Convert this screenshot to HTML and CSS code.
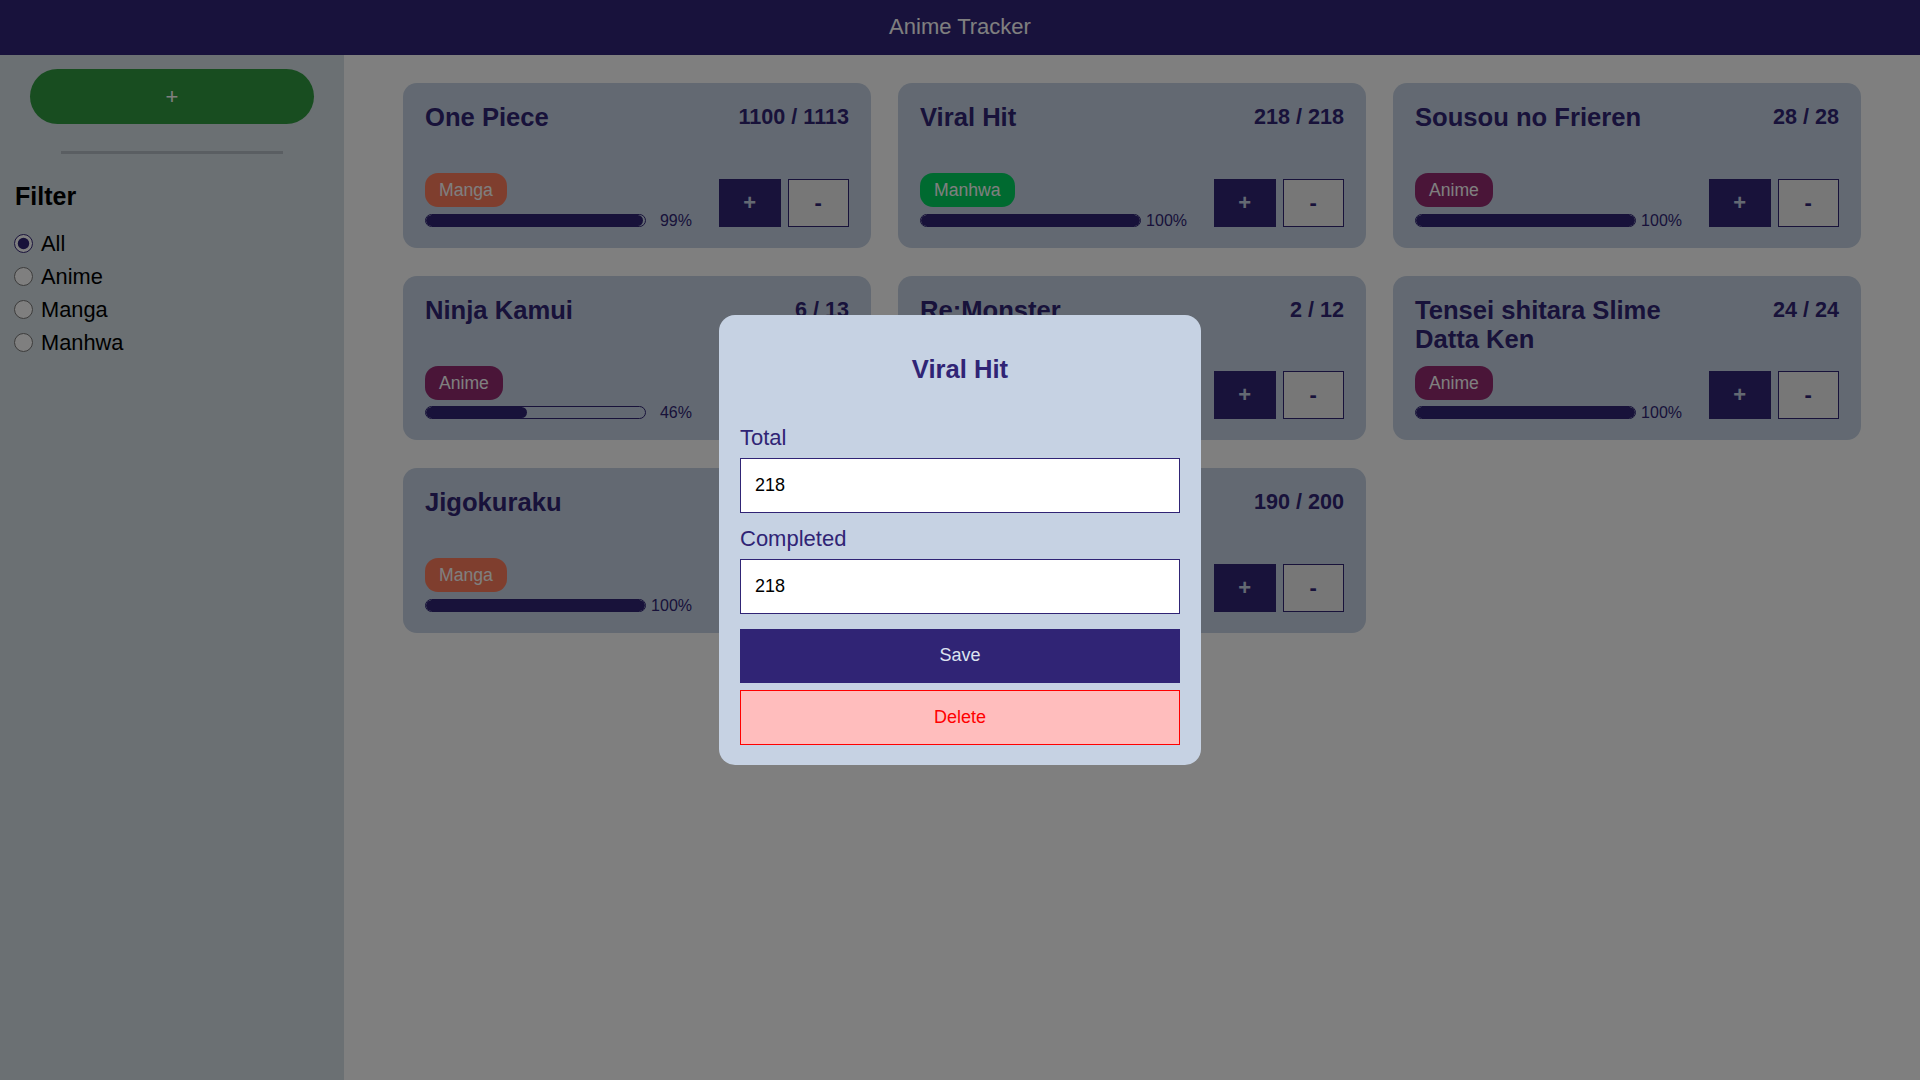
FILE: index.html
```html
<!DOCTYPE html>
<html lang="en">
<head>
<meta charset="utf-8">
<title>Anime Tracker</title>
<link rel="stylesheet" href="styles.css">
</head>
<body>
<header class="topbar">Anime Tracker</header>
<div class="layout">
  <aside class="sidebar">
    <button class="add-btn" type="button">+</button>
    <hr class="divider">
    <h2 class="filter-title">Filter</h2>
    <div class="filter-list">
      <label class="filter-item"><input type="radio" name="filter" checked> All</label>
      <label class="filter-item"><input type="radio" name="filter"> Anime</label>
      <label class="filter-item"><input type="radio" name="filter"> Manga</label>
      <label class="filter-item"><input type="radio" name="filter"> Manhwa</label>
    </div>
  </aside>
  <main class="grid">
    <article class="card">
      <div class="card-head"><h3 class="card-title">One Piece</h3><span class="count">1100 / 1113</span></div>
      <div class="card-foot">
        <div class="meta">
          <span class="badge badge-manga">Manga</span>
          <div class="progress-row"><div class="bar"><div class="fill" style="width:99%"></div></div><span class="pct">99%</span></div>
        </div>
        <div class="actions"><button class="btn-plus" type="button">+</button><button class="btn-minus" type="button">-</button></div>
      </div>
    </article>
    <article class="card">
      <div class="card-head"><h3 class="card-title">Viral Hit</h3><span class="count">218 / 218</span></div>
      <div class="card-foot">
        <div class="meta">
          <span class="badge badge-manhwa">Manhwa</span>
          <div class="progress-row"><div class="bar"><div class="fill" style="width:100%"></div></div><span class="pct">100%</span></div>
        </div>
        <div class="actions"><button class="btn-plus" type="button">+</button><button class="btn-minus" type="button">-</button></div>
      </div>
    </article>
    <article class="card">
      <div class="card-head"><h3 class="card-title">Sousou no Frieren</h3><span class="count">28 / 28</span></div>
      <div class="card-foot">
        <div class="meta">
          <span class="badge badge-anime">Anime</span>
          <div class="progress-row"><div class="bar"><div class="fill" style="width:100%"></div></div><span class="pct">100%</span></div>
        </div>
        <div class="actions"><button class="btn-plus" type="button">+</button><button class="btn-minus" type="button">-</button></div>
      </div>
    </article>
    <article class="card">
      <div class="card-head"><h3 class="card-title">Ninja Kamui</h3><span class="count">6 / 13</span></div>
      <div class="card-foot">
        <div class="meta">
          <span class="badge badge-anime">Anime</span>
          <div class="progress-row"><div class="bar"><div class="fill" style="width:46%"></div></div><span class="pct">46%</span></div>
        </div>
        <div class="actions"><button class="btn-plus" type="button">+</button><button class="btn-minus" type="button">-</button></div>
      </div>
    </article>
    <article class="card">
      <div class="card-head"><h3 class="card-title">Re:Monster</h3><span class="count">2 / 12</span></div>
      <div class="card-foot">
        <div class="meta">
          <span class="badge badge-anime">Anime</span>
          <div class="progress-row"><div class="bar"><div class="fill" style="width:17%"></div></div><span class="pct">17%</span></div>
        </div>
        <div class="actions"><button class="btn-plus" type="button">+</button><button class="btn-minus" type="button">-</button></div>
      </div>
    </article>
    <article class="card">
      <div class="card-head"><h3 class="card-title">Tensei shitara Slime Datta Ken</h3><span class="count">24 / 24</span></div>
      <div class="card-foot">
        <div class="meta">
          <span class="badge badge-anime">Anime</span>
          <div class="progress-row"><div class="bar"><div class="fill" style="width:100%"></div></div><span class="pct">100%</span></div>
        </div>
        <div class="actions"><button class="btn-plus" type="button">+</button><button class="btn-minus" type="button">-</button></div>
      </div>
    </article>
    <article class="card">
      <div class="card-head"><h3 class="card-title">Jigokuraku</h3><span class="count">127 / 127</span></div>
      <div class="card-foot">
        <div class="meta">
          <span class="badge badge-manga">Manga</span>
          <div class="progress-row"><div class="bar"><div class="fill" style="width:100%"></div></div><span class="pct">100%</span></div>
        </div>
        <div class="actions"><button class="btn-plus" type="button">+</button><button class="btn-minus" type="button">-</button></div>
      </div>
    </article>
    <article class="card">
      <div class="card-head"><h3 class="card-title">Solo Leveling</h3><span class="count">190 / 200</span></div>
      <div class="card-foot">
        <div class="meta">
          <span class="badge badge-manhwa">Manhwa</span>
          <div class="progress-row"><div class="bar"><div class="fill" style="width:95%"></div></div><span class="pct">95%</span></div>
        </div>
        <div class="actions"><button class="btn-plus" type="button">+</button><button class="btn-minus" type="button">-</button></div>
      </div>
    </article>
  </main>
</div>
<div class="overlay">
  <form class="modal">
    <h2 class="modal-title">Viral Hit</h2>
    <label class="field-label" for="total">Total</label>
    <input class="field-input field-first" id="total" type="text" value="218">
    <label class="field-label" for="completed">Completed</label>
    <input class="field-input field-second" id="completed" type="text" value="218">
    <button class="save-btn" type="button">Save</button>
    <button class="delete-btn" type="button">Delete</button>
  </form>
</div>
</body>
</html>
```
FILE: styles.css
```css
* { box-sizing: border-box; }

html, body {
  margin: 0;
  height: 100%;
}

body {
  font-family: "Liberation Sans", Arial, sans-serif;
  background: #ffffff;
  color: #000;
  overflow: hidden;
}

.topbar {
  height: 55px;
  background: #302478;
  color: #ffffff;
  font-size: 22px;
  text-align: center;
  padding-top: 14px;
}

.layout {
  display: flex;
  height: calc(100vh - 55px);
}

.sidebar {
  width: 344px;
  flex: 0 0 344px;
  background: #d6e0e6;
  padding: 14px 0 0 0;
  display: flex;
  flex-direction: column;
}

.add-btn {
  margin: 0 30px;
  height: 55px;
  border: none;
  border-radius: 28px;
  background: #309a40;
  color: #ffffff;
  font-family: inherit;
  font-size: 22px;
}

.divider {
  width: 222px;
  margin: 27px auto 0;
  border: none;
  height: 3px;
  background: #b4bcc4;
}

.filter-title {
  margin: 28px 0 0 15px;
  font-size: 25px;
  font-weight: bold;
  line-height: 29px;
}

.filter-list {
  margin-top: 16px;
  padding-left: 14px;
  display: flex;
  flex-direction: column;
}

.filter-item {
  height: 33px;
  display: flex;
  align-items: center;
  gap: 8px;
  font-size: 21.8px;
}

.filter-item input {
  margin: 0;
  width: 19px;
  height: 19px;
  accent-color: #302475;
}

.grid {
  flex: 1;
  display: grid;
  grid-template-columns: repeat(3, 1fr);
  grid-auto-rows: 164.5px;
  gap: 28px 27px;
  padding: 28px 59px;
  align-content: start;
}

.card {
  background: #c6d3e4;
  border-radius: 14px;
  padding: 20px 22px 21px;
  display: flex;
  flex-direction: column;
  justify-content: space-between;
}

.card-head {
  display: flex;
  justify-content: space-between;
  align-items: flex-start;
  gap: 16px;
}

.card-title {
  margin: 0;
  font-size: 25.6px;
  font-weight: bold;
  color: #302475;
  line-height: 1.15;
  max-width: 260px;
}

.count {
  margin-top: 1px;
  font-size: 21.6px;
  font-weight: bold;
  color: #302475;
  white-space: nowrap;
}

.card-foot {
  display: flex;
  justify-content: space-between;
  align-items: flex-end;
}

.meta {
  display: flex;
  flex-direction: column;
  align-items: flex-start;
  gap: 6.5px;
}

.badge {
  display: inline-block;
  padding: 7px 14px;
  border-radius: 13px;
  font-size: 17.6px;
  line-height: 20px;
  color: #ffffff;
}

.badge-manga { background: #ff7d5c; }
.badge-anime { background: #942a70; }
.badge-manhwa { background: #00d460; }

.progress-row {
  display: flex;
  align-items: center;
}

.bar {
  width: 221px;
  height: 13px;
  border: 1px solid #302475;
  border-radius: 7px;
  overflow: hidden;
}

.fill {
  height: 100%;
  background: #302475;
  border-radius: 6px;
}

.pct {
  width: 46px;
  text-align: right;
  font-size: 16px;
  line-height: 13px;
  color: #302475;
}

.actions {
  display: flex;
  gap: 7px;
}

.btn-plus,
.btn-minus {
  width: 61.5px;
  height: 48px;
  border: 1px solid #302475;
  font-family: inherit;
  font-size: 22px;
  font-weight: bold;
  padding: 0;
}

.btn-plus {
  background: #302475;
  color: #c6d3e4;
}

.btn-minus {
  background: #efefef;
  color: #302475;
}

.overlay {
  position: fixed;
  inset: 0;
  background: rgba(0, 0, 0, 0.5);
  display: flex;
  align-items: center;
  justify-content: center;
}

.modal {
  width: 482px;
  background: #c6d2e3;
  border-radius: 16px;
  padding: 20px 21px 20px;
  display: flex;
  flex-direction: column;
}

.modal-title {
  margin: 20px 0 40px;
  text-align: center;
  font-size: 25.6px;
  line-height: 29.4px;
  font-weight: bold;
  color: #302475;
}

.field-label {
  font-size: 22px;
  line-height: 25px;
  color: #302475;
  margin-bottom: 8px;
}

.field-input {
  height: 55px;
  border: 1px solid #302475;
  background: #ffffff;
  padding: 0 14px;
  font-family: inherit;
  font-size: 18px;
  color: #000;
  outline: none;
}

.field-first { margin-bottom: 13px; }
.field-second { margin-bottom: 15px; }

.save-btn,
.delete-btn {
  height: 54.5px;
  font-family: inherit;
  font-size: 18px;
}

.save-btn {
  background: #302475;
  color: #dde3f0;
  border: none;
  margin-bottom: 7px;
}

.delete-btn {
  background: #ffbdbd;
  color: #ff0000;
  border: 1px solid #ff0000;
}
```
